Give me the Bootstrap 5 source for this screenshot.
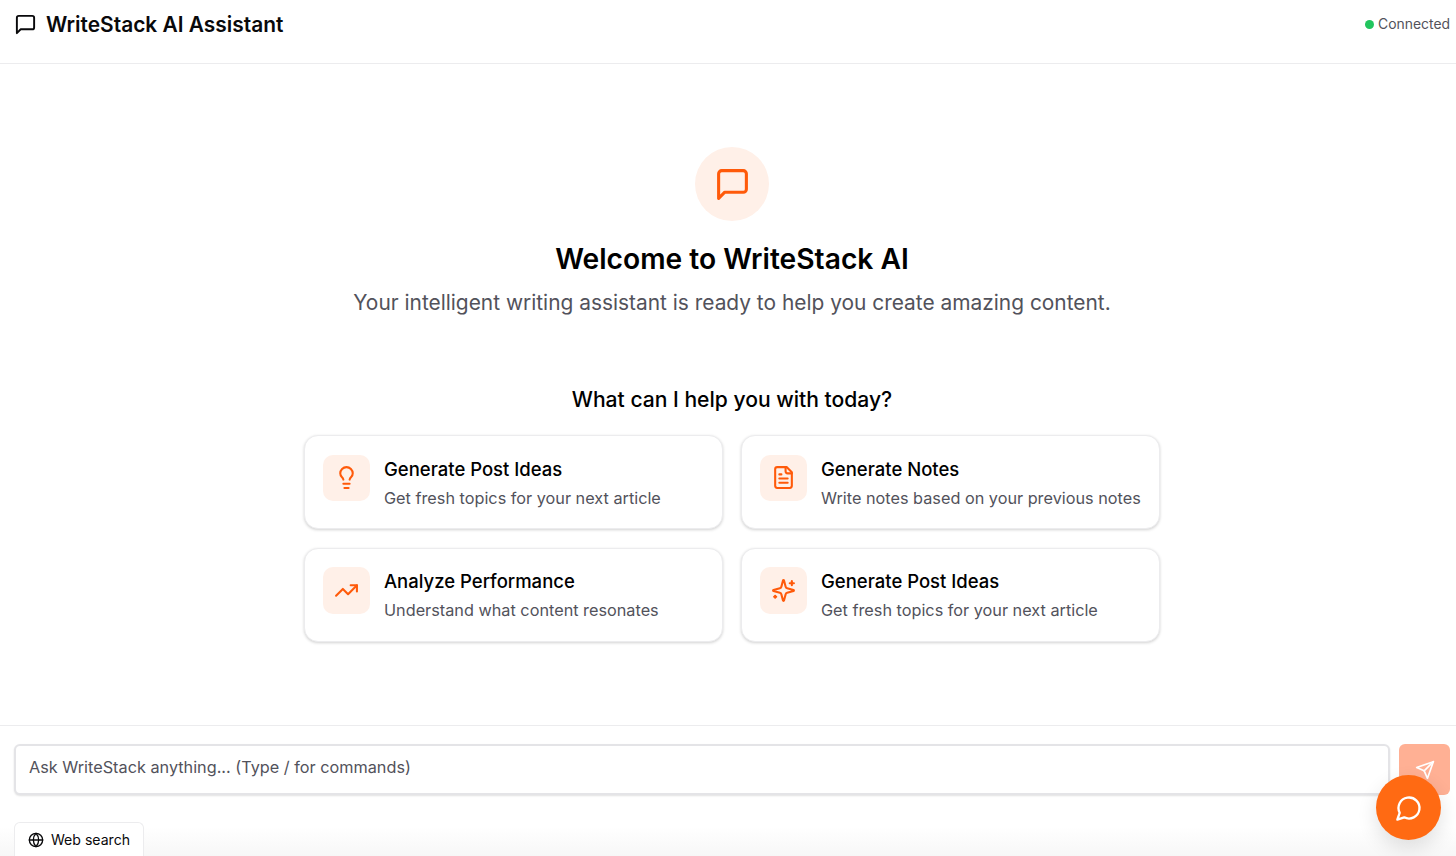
<!DOCTYPE html>
<html lang="en">
<head>
  <meta charset="UTF-8">
  <title>WriteStack AI Assistant</title>
  <link href="https://cdn.jsdelivr.net/npm/bootstrap@5.3.2/dist/css/bootstrap.min.css" rel="stylesheet">
  <style>
    html, body { height: 856px; overflow: hidden; }
    body { font-family: Inter, "Liberation Sans", sans-serif; color: #09090b; background: #fff; }
    svg { fill: none; stroke: currentColor; stroke-linecap: round; stroke-linejoin: round; stroke-width: 2; flex-shrink: 0; }
    .app-shell { height: 856px; overflow: hidden; }
    .top-bar { height: 64px; flex: none; border-bottom: 1px solid #ececee; padding: 0 6px 14px 14px; }
    .top-gap { gap: 9px; }
    .top-title { font-size: 20.9px; font-weight: 600; line-height: 28px; margin: 0; }
    .status-dot { width: 9px; height: 9px; background: #22c55e; border-radius: 50%; }
    .status-text { font-size: 13.9px; color: #52525b; }
    .hero-area { height: 661px; flex: none; padding: 83px 0 0 8px; }
    .hero-circle { width: 74px; height: 74px; border-radius: 50%; background: #fff0e8; color: #ff5a0a; }
    .hero-title { font-size: 28.2px; font-weight: 600; line-height: 36px; margin: 20px 0 0; color: #000; }
    .hero-sub { font-size: 20.9px; line-height: 28px; color: #52525b; margin: 12px 0 0; }
    .help-title { font-size: 21.1px; font-weight: 500; line-height: 28px; margin: 69px 0 21px; color: #000; }
    .prompt-grid { display: grid; grid-template-columns: 419px 419px; gap: 18.5px 18px; }
    .prompt-card { flex-direction: row; gap: 14px; height: 94px; padding: 18.5px 18px; border: 1px solid #ececee; border-radius: 14px; box-shadow: 0 1px 3px rgba(0,0,0,.18); }
    .prompt-icon { width: 47px; height: 46.5px; border-radius: 10px; background: #fff0e8; color: #ff5a0a; }
    .prompt-name { font-size: 18.5px; font-weight: 500; line-height: 28px; color: #000; }
    .prompt-desc { font-size: 16.25px; line-height: 24px; color: #52525b; margin-top: 3px; white-space: nowrap; }
    .bottom-bar { height: 131px; flex: none; border-top: 1px solid #ececee; padding: 18px 6px 0 14px; background: linear-gradient(to bottom, #fff 101px, #f7f7f7); }
    .ask-input.form-control { height: 51px; padding: 0 13px 6px; font-size: 16.25px; color: #52525b; border: 2px solid #e4e4e7; border-radius: 6px; box-shadow: 0 1px 2px rgba(0,0,0,.12); }
    .ask-input.form-control::placeholder { color: #52525b; opacity: 1; }
    .send-btn.btn { width: 51px; height: 51px; padding: 0; border: 0; border-radius: 6px; background: #ffb094; color: #fff; }
    .ask-row { gap: 9px; }
    .web-btn.btn { width: 130px; height: 35px; margin-top: 27px; padding: 0; gap: 7px; font-size: 14.1px; color: #09090b; background: #fff; border: 1px solid #ececee; border-bottom: 0; border-radius: 6px 6px 0 0; }
    .float-btn.btn { position: fixed; left: 1376px; top: 775px; width: 65px; height: 65px; padding: 0; border: 0; border-radius: 50%; background: #ff6a13; color: #fff; box-shadow: 0 8px 20px rgba(0,0,0,.12); }
  </style>
</head>
<body>

<div class="app-shell d-flex flex-column">
  <header class="top-bar d-flex align-items-center justify-content-between">
    <div class="top-gap d-flex align-items-center">
      <svg width="23" height="23" viewBox="0 0 24 24"><path d="M21 15a2 2 0 0 1-2 2H7l-4 4V5a2 2 0 0 1 2-2h14a2 2 0 0 1 2 2z"/></svg>
      <h1 class="top-title">WriteStack AI Assistant</h1>
    </div>
    <div class="d-flex align-items-center gap-1">
      <span class="status-dot"></span>
      <span class="status-text">Connected</span>
    </div>
  </header>

  <main class="hero-area d-flex flex-column align-items-center">
    <div class="hero-circle d-flex align-items-center justify-content-center">
      <svg width="37" height="37" viewBox="0 0 24 24"><path d="M21 15a2 2 0 0 1-2 2H7l-4 4V5a2 2 0 0 1 2-2h14a2 2 0 0 1 2 2z"/></svg>
    </div>
    <h2 class="hero-title">Welcome to WriteStack AI</h2>
    <p class="hero-sub">Your intelligent writing assistant is ready to help you create amazing content.</p>
    <h3 class="help-title">What can I help you with today?</h3>
    <div class="prompt-grid">
      <div class="card prompt-card">
        <div class="prompt-icon d-flex align-items-center justify-content-center">
          <svg width="25" height="25" viewBox="0 0 24 24"><path d="M15 14c.2-1 .7-1.7 1.5-2.5 1-.9 1.5-2.2 1.5-3.5A6 6 0 0 0 6 8c0 1 .2 2.2 1.5 3.5.7.7 1.3 1.5 1.5 2.5"/><path d="M9 18h6"/><path d="M10 22h4"/></svg>
        </div>
        <div>
          <div class="prompt-name">Generate Post Ideas</div>
          <div class="prompt-desc">Get fresh topics for your next article</div>
        </div>
      </div>
      <div class="card prompt-card">
        <div class="prompt-icon d-flex align-items-center justify-content-center">
          <svg width="25" height="25" viewBox="0 0 24 24"><path d="M15 2H6a2 2 0 0 0-2 2v16a2 2 0 0 0 2 2h12a2 2 0 0 0 2-2V7Z"/><path d="M14 2v4a2 2 0 0 0 2 2h4"/><path d="M10 9H8"/><path d="M16 13H8"/><path d="M16 17H8"/></svg>
        </div>
        <div>
          <div class="prompt-name">Generate Notes</div>
          <div class="prompt-desc">Write notes based on your previous notes</div>
        </div>
      </div>
      <div class="card prompt-card">
        <div class="prompt-icon d-flex align-items-center justify-content-center">
          <svg width="25" height="25" viewBox="0 0 24 24"><polyline points="22 7 13.5 15.5 8.5 10.5 2 17"/><polyline points="16 7 22 7 22 13"/></svg>
        </div>
        <div>
          <div class="prompt-name">Analyze Performance</div>
          <div class="prompt-desc">Understand what content resonates</div>
        </div>
      </div>
      <div class="card prompt-card">
        <div class="prompt-icon d-flex align-items-center justify-content-center">
          <svg width="25" height="25" viewBox="0 0 24 24"><path d="M9.937 15.5A2 2 0 0 0 8.5 14.063l-6.135-1.582a.5.5 0 0 1 0-.962L8.5 9.936A2 2 0 0 0 9.937 8.5l1.582-6.135a.5.5 0 0 1 .963 0L14.063 8.5A2 2 0 0 0 15.5 9.937l6.135 1.581a.5.5 0 0 1 0 .964L15.5 14.063a2 2 0 0 0-1.437 1.437l-1.582 6.135a.5.5 0 0 1-.963 0z"/><path d="M20 3v4"/><path d="M22 5h-4"/><path d="M4 17v2"/><path d="M5 18H3"/></svg>
        </div>
        <div>
          <div class="prompt-name">Generate Post Ideas</div>
          <div class="prompt-desc">Get fresh topics for your next article</div>
        </div>
      </div>
    </div>
  </main>

  <footer class="bottom-bar">
    <div class="ask-row d-flex">
      <input type="text" class="form-control ask-input" placeholder="Ask WriteStack anything... (Type / for commands)">
      <button type="button" class="btn send-btn flex-shrink-0 d-flex align-items-center justify-content-center">
        <svg width="20" height="20" viewBox="0 0 24 24"><path d="m22 2-7 20-4-9-9-4Z"/><path d="M22 2 11 13"/></svg>
      </button>
    </div>
    <button type="button" class="btn web-btn d-flex align-items-center justify-content-center">
      <svg width="16" height="16" viewBox="0 0 24 24"><circle cx="12" cy="12" r="10"/><path d="M12 2a14.5 14.5 0 0 0 0 20 14.5 14.5 0 0 0 0-20"/><path d="M2 12h20"/></svg>
      Web search
    </button>
  </footer>
</div>

<button type="button" class="btn float-btn d-flex align-items-center justify-content-center">
  <svg width="28" height="28" viewBox="0 0 24 24"><path d="M7.9 20A9 9 0 1 0 4 16.1L2 22Z"/></svg>
</button>

<script src="https://cdn.jsdelivr.net/npm/bootstrap@5.3.2/dist/js/bootstrap.bundle.min.js"></script>
</body>
</html>
